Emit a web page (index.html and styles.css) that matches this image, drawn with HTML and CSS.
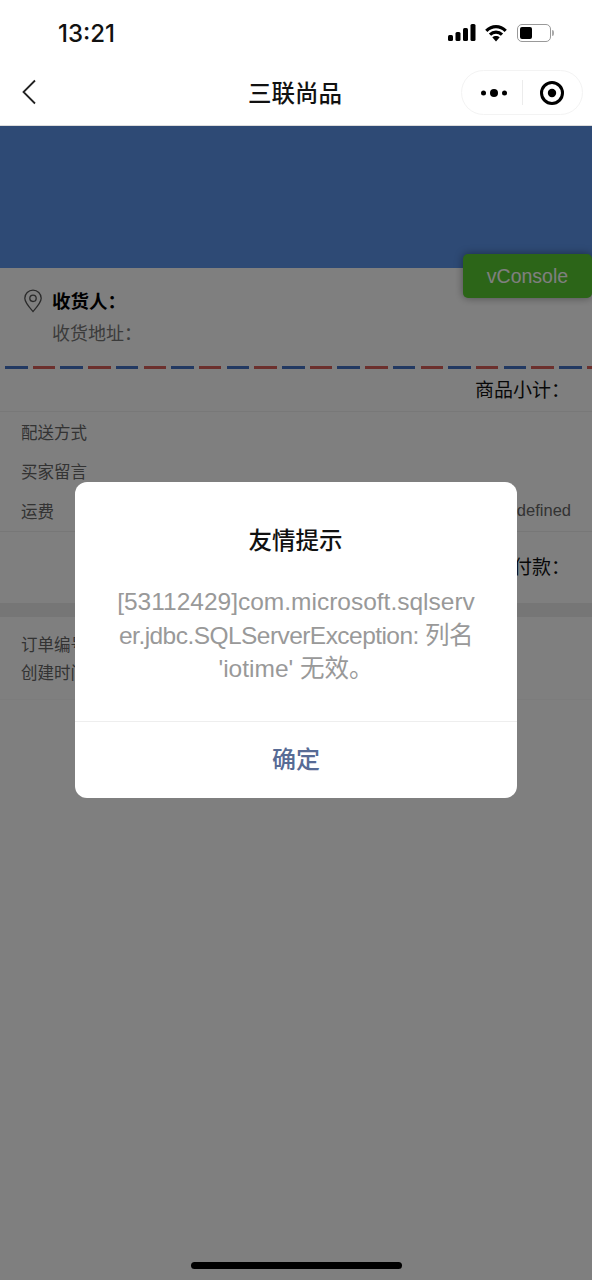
FILE: index.html
```html
<!DOCTYPE html>
<html lang="zh">
<head>
<meta charset="utf-8">
<title>三联尚品</title>
<link rel="stylesheet" href="styles.css">
</head>
<body>
<div class="page">
  <header class="status">
    <span class="clock">13:21</span>
    <div class="status-icons">
      <svg class="signal" width="28" height="18" viewBox="0 0 28 18"><rect x="0" y="11" width="5" height="6" rx="1.500"/><rect x="7.500" y="8" width="5" height="9" rx="1.500"/><rect x="15" y="4" width="5" height="13" rx="1.500"/><rect x="22.500" y="0" width="5" height="17" rx="1.500"/></svg>
      <svg class="wifi" width="22" height="18" viewBox="0 0 22 18"><path class="arc" d="M1.300 6.800C6.800 1.200 15.200 1.200 20.700 6.800"/><path class="arc" d="M5 10.700C8.400 7.300 13.600 7.300 17 10.700"/><path d="M7.300 13.300C9.400 11.500 12.600 11.500 14.700 13.300L11 17.500Z"/></svg>
      <div class="battery"><div class="battery-fill"></div></div>
      <div class="battery-tip"></div>
    </div>
  </header>
  <nav class="nav">
    <svg class="back" width="16" height="26" viewBox="0 0 16 26"><path d="M14 1.500 2.500 13 14 24.500"/></svg>
    <h1 class="nav-title">三联尚品</h1>
    <div class="capsule">
      <svg class="dots" width="26" height="10" viewBox="0 0 26 10"><circle cx="2.500" cy="5" r="2.500"/><circle cx="13" cy="5" r="4"/><circle cx="23.500" cy="5" r="2.500"/></svg>
      <span class="capsule-sep"></span>
      <svg class="target" width="26" height="26" viewBox="0 0 26 26"><circle class="ring" cx="13" cy="13" r="10.500"/><circle cx="13" cy="13" r="4.200"/></svg>
    </div>
  </nav>
  <div class="banner"></div>
  <section class="address">
    <svg class="pin" width="20" height="24" viewBox="0 0 20 24"><path d="M10 22.500C5.500 17.500 1.800 13.500 1.800 9.300a8.200 8.200 0 0 1 16.400 0c0 4.200-3.700 8.200-8.200 13.200Z"/><circle cx="10" cy="9.300" r="3.200"/></svg>
    <div class="address-text">
      <div class="receiver">收货人：</div>
      <div class="addr-line">收货地址：</div>
    </div>
  </section>
  <div class="airmail"></div>
  <div class="subtotal">商品小计：</div>
  <section class="rows">
    <div class="row"><span>配送方式</span></div>
    <div class="row"><span>买家留言</span></div>
    <div class="row"><span>运费</span><span>undefined</span></div>
  </section>
  <div class="pay">实付款：</div>
  <section class="order">
    <div>订单编号：</div>
    <div>创建时间：</div>
  </section>
  <button class="vconsole">vConsole</button>
  <div class="home-bar"></div>
</div>
<div class="mask"></div>
<div class="modal">
  <h2 class="modal-title">友情提示</h2>
  <div class="modal-body">
    <div>[53112429]com.microsoft.sqlserv</div>
    <div class="tight">er.jdbc.SQLServerException: 列名</div>
    <div>'iotime' 无效。</div>
  </div>
  <div class="modal-foot">确定</div>
</div>
</body>
</html>
```
FILE: styles.css
```css
* { box-sizing: border-box; }
html, body { margin: 0; height: 1280px; overflow: hidden; background: #fff; }
body { font-family: "Liberation Sans", "Noto Sans CJK SC", sans-serif; color: #000; }
.page { position: relative; height: 1280px; }
.status { height: 62px; padding: 20px 38px 0 58px; display: flex; justify-content: space-between; align-items: flex-start; }
.clock { font-size: 24px; line-height: 27px; font-weight: 500; font-family: Inter, "Liberation Sans", sans-serif; color: #111; }
.status-icons { display: flex; align-items: center; padding-top: 4px; }
.status-icons svg { fill: #000; }
.signal { margin-right: 9px; }
.wifi { margin-right: 10px; }
.status-icons .arc { fill: none; stroke: #000; stroke-width: 3.200; }
.battery { width: 34px; height: 18px; border: 1.500px solid #999; border-radius: 5px; padding: 2px; }
.battery-fill { width: 12px; height: 100%; background: #000; border-radius: 2px; }
.battery-tip { width: 2px; height: 6px; background: #aaa; margin-left: 1px; border-radius: 0 2px 2px 0; }
.nav { height: 64px; position: relative; display: flex; align-items: center; justify-content: center; border-bottom: 1px solid #ddd; }
.back { position: absolute; left: 21px; top: 17px; fill: none; stroke: #222; stroke-width: 1.800; }
.nav-title { margin: 0 2px 0 0; font-size: 23.500px; line-height: 32px; font-weight: 500; color: #111; }
.capsule { position: absolute; left: 461px; top: 8px; width: 122px; height: 45px; border: 1px solid #f3f3f3; border-radius: 23px; display: flex; align-items: center; padding-left: 19px; }
.dots { fill: #000; }
.target { fill: #000; }
.target .ring { fill: none; stroke: #000; stroke-width: 3; }
.capsule-sep { width: 1px; height: 25px; background: #ececec; margin: 0 16px 0 15px; }
.banner { height: 142px; background: #5c94ea; }
.address { height: 98px; background: #fff; padding: 21px 0 0 23px; display: flex; gap: 9px; }
.pin { fill: none; stroke: #555; stroke-width: 1.300; }
.receiver { font-size: 18.500px; line-height: 26px; font-weight: 700; color: #000; }
.addr-line { font-size: 18px; line-height: 26px; margin-top: 6px; color: #777; }
.airmail { height: 3px; margin-left: 5px; background: repeating-linear-gradient(90deg, #4472c4 0 22.500px, transparent 22.500px 27.700px, #d9605a 27.700px 50.200px, transparent 50.200px 55.400px); }
.subtotal { height: 43px; padding: 8px 22px 0 0; text-align: right; font-size: 19px; line-height: 28px; color: #111; border-bottom: 1px solid #f0f0f0; }
.rows { height: 120px; padding: 0 21px; border-bottom: 1px solid #eee; font-size: 16.500px; color: #666; }
.row { height: 39.500px; display: flex; justify-content: space-between; align-items: center; }
.pay { height: 71px; padding: 22px 22px 0 0; text-align: right; font-size: 19px; line-height: 28px; color: #111; }
.order { margin-top: 14px; height: 83px; padding: 14px 21px 0; background: #fff; font-size: 16.500px; line-height: 28px; color: #666; box-shadow: 0 -14px 0 #ececec; border-bottom: 1px solid #f8f8f8; }
.vconsole { position: absolute; right: 0; top: 254px; width: 129px; height: 44px; padding: 0; border: 0; border-radius: 5px; background: #58ca30; color: #fff; font: 19.500px/44px "Liberation Sans", sans-serif; box-shadow: 0 0 8px rgba(0,0,0,.4); }
.home-bar { position: absolute; left: 191px; top: 1262px; width: 211px; height: 7px; border-radius: 4px; background: #000; z-index: 3; }
.mask { position: absolute; left: 0; right: 0; top: 126px; bottom: 0; background: rgba(0,0,0,.5); }
.modal { position: absolute; left: 75px; top: 482px; width: 442px; height: 316px; background: #fff; border-radius: 12px; text-align: center; display: flex; flex-direction: column; }
.modal-title { margin: 0 1px 0 0; padding-top: 43px; font-size: 23.500px; line-height: 32px; font-weight: 500; color: #111; }
.modal-body { padding-top: 28px; height: 164px; font-size: 24.500px; line-height: 33.500px; color: #999; white-space: nowrap; }
.tight { letter-spacing: -0.550px; }
.modal-foot { flex: 1; border-top: 1px solid #eee; font-size: 24px; font-weight: 500; line-height: 76px; color: #576b95; }
```
